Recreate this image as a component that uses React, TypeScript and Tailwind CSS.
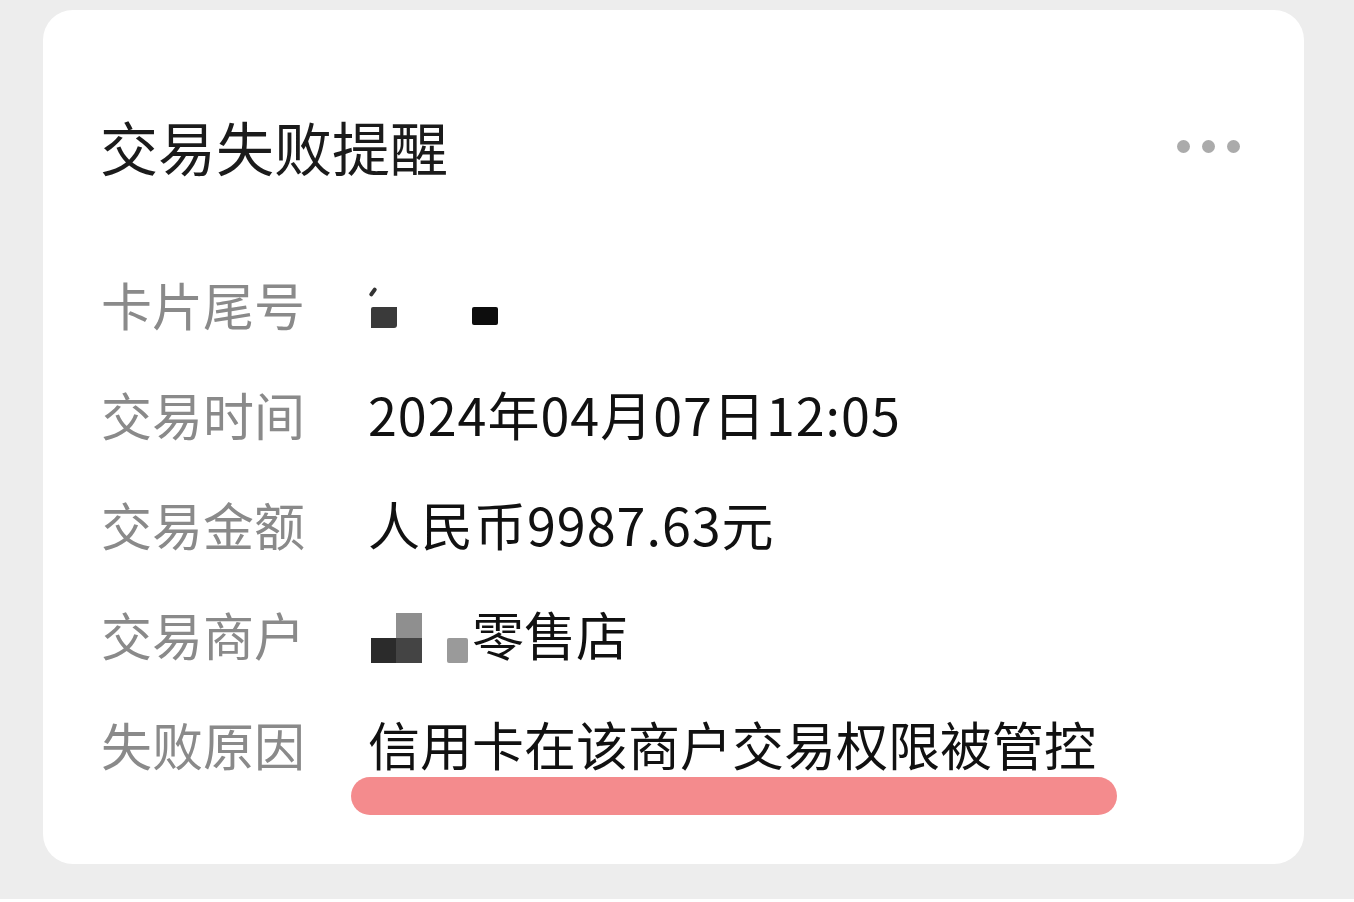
const FONT = "font-['Noto_Sans_CJK_SC','Noto_Sans',sans-serif]";

const rows: { label: string; value: React.ReactNode; digits?: boolean }[] = [
  { label: "卡片尾号", value: <CardMask /> },
  { label: "交易时间", value: "2024年04月07日12:05", digits: true },
  { label: "交易金额", value: "人民币9987.63元", digits: true },
  { label: "交易商户", value: <MerchantMask /> },
  { label: "失败原因", value: "信用卡在该商户交易权限被管控" },
];

function CardMask() {
  return (
    <div className="relative h-[110px] w-[140px]">
      <span className="absolute left-[3px] top-[38px] h-[10px] w-[4px] rotate-[35deg] rounded-full bg-[#333]" />
      <span className="absolute left-[3px] top-[58px] h-[21px] w-[26px] rounded-br-[3px] rounded-tl-[2px] bg-[#3a3a3a]" />
      <span className="absolute left-[104px] top-[58px] h-[18px] w-[26px] rounded-[2px] bg-[#0d0d0d]" />
    </div>
  );
}

function MerchantMask() {
  return (
    <div className="flex items-center">
      <div className="relative h-[110px] w-[80px]">
        <span className="absolute left-[28px] top-[34px] h-[25px] w-[26px] bg-[#8f8f8f]" />
        <span className="absolute left-[3px] top-[59px] h-[25px] w-[25px] bg-[#2b2b2b]" />
        <span className="absolute left-[28px] top-[59px] h-[25px] w-[26px] bg-[#444]" />
        <span className="absolute left-[79px] top-[59px] h-[25px] w-[21px] rounded-[2px] bg-[#9a9a9a]" />
      </div>
      <span className="ml-[24px]">零售店</span>
    </div>
  );
}

export default function App() {
  return (
    <div className={`h-[902px] w-[1354px] overflow-hidden border-b-[3px] border-white bg-[#ededed] pl-[43px] pt-[10px] ${FONT}`}>
      <div className="h-[854px] w-[1261px] rounded-[30px] bg-white pl-[57px] pr-[64px] pt-[96px]">
        <div className="flex h-[80px] items-center justify-between">
          <h1 className="text-[58px] leading-[80px] text-[#1b1b1b]">交易失败提醒</h1>
          <div className="flex gap-[12px]">
            <span className="h-[13px] w-[13px] rounded-full bg-[#ababab]" />
            <span className="h-[13px] w-[13px] rounded-full bg-[#ababab]" />
            <span className="h-[13px] w-[13px] rounded-full bg-[#ababab]" />
          </div>
        </div>

        <div className="mt-[63px]">
          {rows.map((r, i) => (
            <div key={r.label} className="relative flex h-[110px] items-center leading-[110px]">
              <span className="ml-[1px] w-[267px] shrink-0 text-[51px] text-[#8a8a8a]">{r.label}</span>
              <div className={`text-[52px] text-[#111] ${r.digits ? "tracking-[1px]" : ""}`}>
                {r.value}
              </div>
              {i === rows.length - 1 && (
                <span className="absolute left-[251px] top-[88px] h-[38px] w-[766px] rounded-full bg-[#f48b8d]" />
              )}
            </div>
          ))}
        </div>
      </div>
    </div>
  );
}
